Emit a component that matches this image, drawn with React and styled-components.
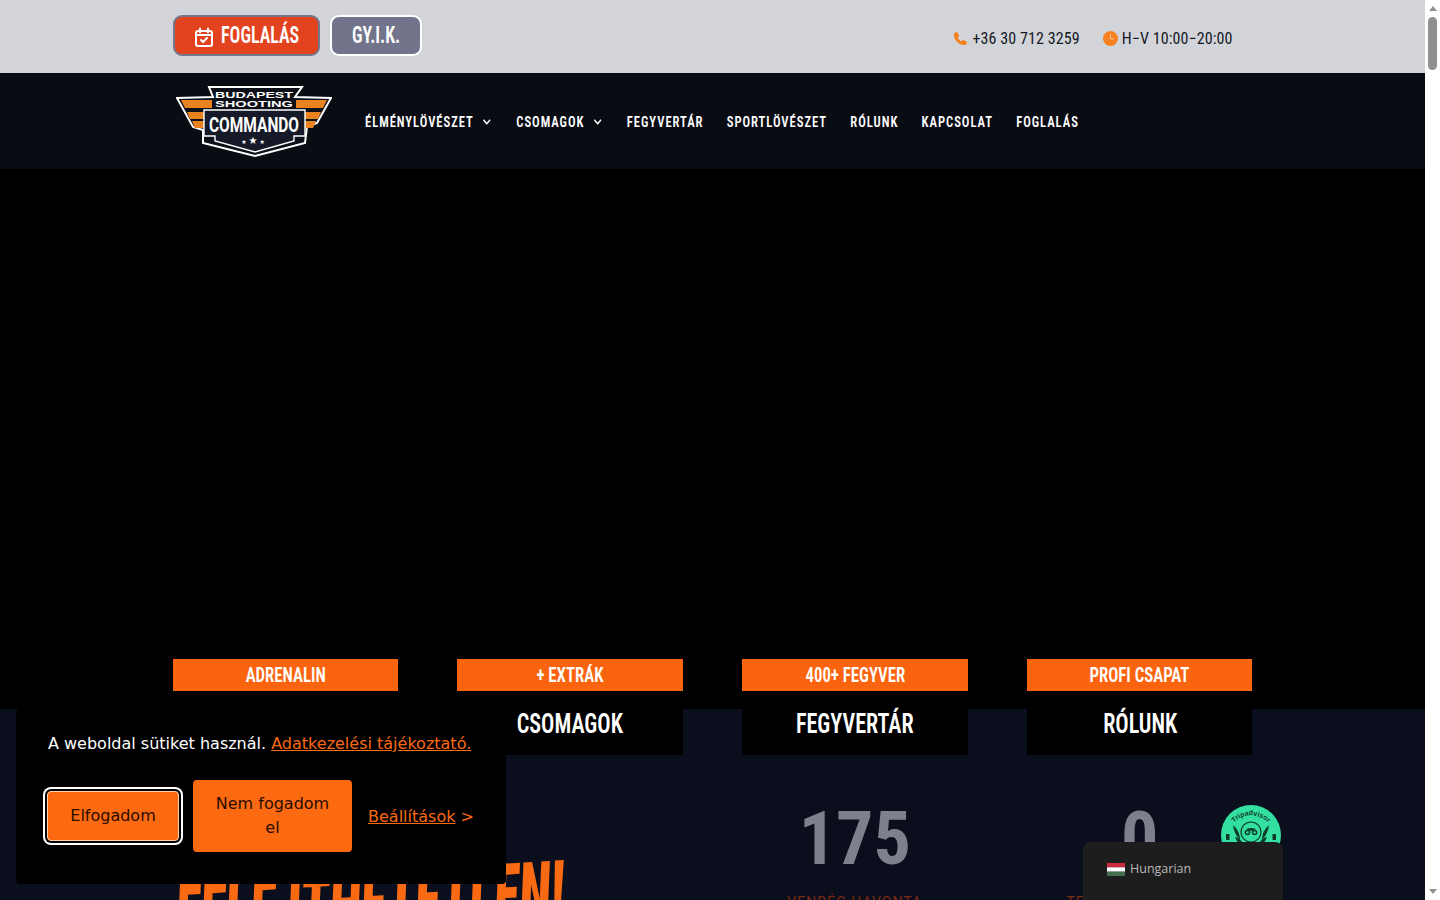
import React from 'react'
import styled, {createGlobalStyle} from 'styled-components'
import {ChevronDown} from 'lucide-react'

const GlobalStyle = createGlobalStyle`
    html, body {
        margin: 0;
        height: 100%;
        overflow: hidden;
        background: #fff;
    }
    * {
        box-sizing: border-box;
    }
`

const CONDENSED = `"Roboto", "Liberation Sans", sans-serif`

const Shell = styled.div`
    display: flex;
    width: 1440px;
    height: 900px;
    overflow: hidden;
`
const Page = styled.div`
    width: 1425px;
    flex: none;
    height: 900px;
    overflow: hidden;
    background: #0b0e1c;
`
const Container = styled.div`
    width: 1080px;
    margin: 0 auto;
    display: flex;
    align-items: center;
`
const TopBar = styled.div`
    height: 73px;
    background: #d2d4da;
`
const TopInner = styled(Container)`
    height: 73px;
    justify-content: space-between;
    padding-right: 20px;
`
const TopButtons = styled.div`
    display: flex;
    gap: 10px;
    margin-top: -3px;
`
const TopButton = styled.a`
    display: flex;
    align-items: center;
    justify-content: center;
    gap: 7px;
    width: ${p => p.$width}px;
    height: 41px;
    border-radius: 9px;
    border: 2px solid ${p => p.$border};
    background: ${p => p.$bg};
    color: #fff;
    font-family: ${CONDENSED};
    font-stretch: 75%;
    font-size: 23px;
    font-weight: 600;
    svg {
        margin-top: 3px;
    }
`
const TopLabel = styled.span`
    display: block;
    width: ${p => p.$width}px;
    white-space: nowrap;
    transform: scaleX(0.78);
    transform-origin: left center;
`
const ContactList = styled.div`
    display: flex;
    gap: 23px;
    margin-top: 3px;
`
const Contact = styled.div`
    display: flex;
    align-items: center;
    gap: 4px;
    color: #16181f;
    font-family: "Roboto", sans-serif;
    font-stretch: 75%;
    font-size: 16px;
    letter-spacing: 0.1px;
`
const NavBar = styled.div`
    height: 96px;
    background: #0a0c14;
`
const NavInner = styled(Container)`
    height: 96px;
`
const LogoBox = styled.div`
    width: 192.5px;
    flex: none;
    padding-left: 3.5px;
    display: flex;
    margin-top: 1px;
`
const NavList = styled.nav`
    display: flex;
    align-items: center;
    gap: 27.7px;
    margin-top: 1px;
    transform: scaleX(0.84);
    transform-origin: left center;
`
const NavLink = styled.a`
    display: flex;
    align-items: center;
    gap: 8.8px;
    color: #fff;
    font-family: ${CONDENSED};
    font-stretch: 75%;
    font-size: 15px;
    font-weight: 600;
    letter-spacing: 1.15px;
    white-space: nowrap;
`
const Hero = styled.div`
    height: 540px;
    background: #000;
`
const CardRow = styled(Container)`
    justify-content: space-between;
    align-items: flex-start;
    margin-top: -50px;
`
const Card = styled.div`
    width: 225.5px;
    height: 96px;
    background: #000;
    display: flex;
    flex-direction: column;
`
const CardTag = styled.div`
    height: 32px;
    background: #fb640f;
    color: #fff;
    font-family: ${CONDENSED};
    font-stretch: 75%;
    font-size: 20px;
    font-weight: 600;
    display: flex;
    align-items: center;
    justify-content: center;
    span {
        transform: scaleX(0.84);
    }
`
const CardTitle = styled.div`
    flex: 1;
    padding-top: 1px;
    color: #fff;
    font-family: ${CONDENSED};
    font-stretch: 75%;
    font-size: 27px;
    font-weight: 600;
    display: flex;
    align-items: center;
    justify-content: center;
    span {
        transform: scaleX(0.82);
    }
`
const Lower = styled(Container)`
    align-items: flex-start;
    height: 145px;
`
const HeadlineCol = styled.div`
    width: 569.5px;
    flex: none;
`
const Headline = styled.h1`
    margin: 119px 0 0 5px;
    color: #f96a13;
    font-family: ${CONDENSED};
    font-stretch: 75%;
    font-size: 84px;
    font-weight: 900;
    line-height: 1;
    white-space: nowrap;
    width: max-content;
    transform: rotate(-3.6deg) skewX(-6deg) scaleX(0.615);
    transform-origin: left top;
`
const Stat = styled.div`
    width: 225.5px;
    flex: none;
    margin-right: ${p => p.$last ? '0' : '59.5px'};
    margin-top: 47px;
    text-align: center;
`
const StatNumber = styled.div`
    color: #7e818b;
    font-family: "Roboto", sans-serif;
    font-stretch: 84%;
    font-size: 74px;
    font-weight: 700;
    line-height: 74px;
`
const StatLabel = styled.div`
    margin-top: 18px;
    color: #7a2a12;
    font-family: "Roboto", sans-serif;
    font-size: 14px;
    letter-spacing: 1px;
    white-space: nowrap;
`
const Badge = styled.div`
    position: absolute;
    left: 1221px;
    top: 805px;
    width: 60px;
    height: 60px;
`
const ScrollTrack = styled.div`
    width: 15px;
    flex: none;
    height: 900px;
    background: #fff;
    display: flex;
    flex-direction: column;
    align-items: center;
`
const ScrollArrow = styled.div`
    width: 0;
    height: 0;
    margin-top: ${p => p.$down ? 'auto' : '6px'};
    margin-bottom: ${p => p.$down ? '6px' : '0'};
    border-left: 4.5px solid transparent;
    border-right: 4.5px solid transparent;
    ${p => p.$down ? 'border-top: 5px solid #8f8f8f;' : 'border-bottom: 5px solid #8f8f8f;'}
`
const ScrollThumb = styled.div`
    width: 9px;
    height: 53px;
    margin-top: 6px;
    border-radius: 5px;
    background: #8f8f8f;
`
const CookieBanner = styled.div`
    position: fixed;
    left: 16px;
    top: 709px;
    width: 490px;
    height: 175px;
    padding: 25px 32px;
    border-radius: 4px;
    background: #000;
    color: #fff;
    font-family: "DejaVu Sans", sans-serif;
    font-size: 16px;
`
const CookieText = styled.div`
    line-height: 20px;
`
const OrangeLink = styled.a`
    color: #f96a13;
    text-decoration: underline;
`
const CookieActions = styled.div`
    display: flex;
    align-items: center;
    margin-top: 26px;
    margin-left: -1px;
    gap: 14px;
`
const CookieButton = styled.button`
    border: ${p => p.$focused ? '1px solid #ffcfa8' : '0'};
    border-radius: 4px;
    padding: 0 ${p => p.$focused ? '10px' : '22px'};
    width: ${p => p.$width}px;
    height: ${p => p.$height}px;
    background: #fb6a10;
    color: #2a0d00;
    font-family: "DejaVu Sans", sans-serif;
    font-size: 16px;
    line-height: 24px;
    box-shadow: ${p => p.$focused ? '0 0 0 2px #000, 0 0 0 4px #fff' : 'none'};
`
const SettingsLink = styled.span`
    color: #f96a13;
    margin-left: 2px;
    white-space: nowrap;
`
const LangSwitcher = styled.div`
    position: fixed;
    left: 1083px;
    top: 842px;
    width: 200px;
    height: 58px;
    padding: 18px 24px;
    border-radius: 8px 8px 0 0;
    background: #1d1d1d;
    display: flex;
    align-items: flex-start;
    gap: 5px;
    color: #b8b8b8;
    font-family: "Open Sans", sans-serif;
    font-size: 12.5px;
    line-height: 18px;
`
const FlagIcon = styled.svg`
    margin-top: 3px;
`

function Logo(){
    return (
        <svg width="156" height="72" viewBox="0 0 156 72">
            <path d="M1 12 L37 11 L33 1 L126 1 L119 11 L155 12 L141 37 L131 41 L129 57 L79 70 L27 57 L27 44 L17 41 Z" fill="#0d1018" stroke="#fff" strokeWidth="2" />
            <g fill="#e98320">
                <path d="M5 14 H36 V22 H9 Z" />
                <path d="M11 26 H28 V33 H14 Z" />
                <path d="M16 35 H28 V42 H19 Z" />
                <path d="M120 14 H151 L147 22 H120 Z" />
                <path d="M128 26 H145 L142 33 H128 Z" />
                <path d="M128 35 H140 L137 42 H128 Z" />
            </g>
            <text x="78" y="12" textAnchor="middle" fill="#fff" fontFamily="Liberation Sans" fontWeight="700" fontSize="9" textLength="78" lengthAdjust="spacingAndGlyphs">BUDAPEST</text>
            <text x="78" y="20.500" textAnchor="middle" fill="#fff" fontFamily="Liberation Sans" fontWeight="700" fontSize="9" textLength="78" lengthAdjust="spacingAndGlyphs">SHOOTING</text>
            <path d="M28 24 H129 V50 H118 V55 L79 66 L39 55 V50 H28 Z" fill="#161a28" stroke="#fff" strokeWidth="1.400" />
            <text x="78" y="46" textAnchor="middle" fill="#fff" fontFamily="Roboto" fontWeight="700" fontSize="21" textLength="90" lengthAdjust="spacingAndGlyphs">COMMANDO</text>
            <text x="78" y="58" textAnchor="middle" fill="#fff" fontFamily="DejaVu Sans" fontSize="6" letterSpacing="2">★<tspan fontSize="10">★</tspan>★</text>
        </svg>
    )
}

function CalendarIcon(){
    return (
        <svg width="20" height="20" viewBox="0 0 20 20" fill="none" stroke="#fff" strokeWidth="2" strokeLinecap="round" strokeLinejoin="round">
            <rect x="2" y="4" width="16" height="15" rx="2" />
            <path d="M6 1.500v4M14 1.500v4M2 8h16" />
            <path d="M7 13l2 2 4-4" />
        </svg>
    )
}

function PhoneIcon(){
    return (
        <svg width="15" height="15" viewBox="0 0 24 24" fill="#f7811e">
            <path d="M6.600 1.500 L9.500 7.200 C9.800 7.900 9.600 8.600 9.100 9.100 L7.600 10.600 C8.700 13 10.900 15.300 13.400 16.400 L14.900 14.900 C15.400 14.400 16.100 14.200 16.800 14.500 L22.500 17.400 C23 19.500 21.500 22.500 18.500 22.500 C9.500 22.500 1.500 14 1.500 5.500 C1.500 3 4.500 1 6.600 1.500 Z" />
        </svg>
    )
}

function ClockIcon(){
    return (
        <svg width="15" height="15" viewBox="0 0 15 15">
            <circle cx="7.500" cy="7.500" r="7.500" fill="#f7811e" />
            <path d="M7.500 3.500 V7.800 H11" fill="none" stroke="#f7c9a0" strokeWidth="1" />
        </svg>
    )
}

function TripBadge(){
    return (
        <svg width="60" height="60" viewBox="0 0 60 60">
            <circle cx="30" cy="30" r="30" fill="#34e0a1" />
            <path id="tripArc" d="M9 24 A23 23 0 0 1 51 24" fill="none" />
            <text fontFamily="Liberation Sans" fontWeight="700" fontSize="7" fill="#0c3b2c">
                <textPath href="#tripArc" startOffset="50%" textAnchor="middle">Tripadvisor</textPath>
            </text>
            <circle cx="30" cy="27" r="10" fill="none" stroke="#0c3b2c" strokeWidth="1.200" />
            <circle cx="26.400" cy="27.500" r="2.800" fill="#0c3b2c" />
            <circle cx="33.600" cy="27.500" r="2.800" fill="#0c3b2c" />
            <circle cx="26.400" cy="27.500" r="1.300" fill="#34e0a1" />
            <circle cx="33.600" cy="27.500" r="1.300" fill="#34e0a1" />
            <path d="M25 24 Q30 22 35 24 L30 26 Z" fill="#0c3b2c" />
            <g fill="#0c3b2c">
                <path d="M12 20 Q19 26 19 35 Q13 29 12 20 Z" />
                <path d="M14 32 Q20 33 24 42 Q17 40 14 32 Z" />
                <path d="M48 20 Q41 26 41 35 Q47 29 48 20 Z" />
                <path d="M46 32 Q40 33 36 42 Q43 40 46 32 Z" />
                <rect x="5" y="29" width="3.500" height="6" />
                <rect x="51.500" y="29" width="3.500" height="6" />
            </g>
        </svg>
    )
}

function Flag(){
    return (
        <FlagIcon width="18" height="13" viewBox="0 0 18 13">
            <rect width="18" height="4.330" fill="#cd2a3e" />
            <rect y="4.330" width="18" height="4.340" fill="#fff" />
            <rect y="8.670" width="18" height="4.330" fill="#436f4d" />
        </FlagIcon>
    )
}

const cards = [
    {tag: 'ADRENALIN', title: ''},
    {tag: '+ EXTRÁK', title: 'CSOMAGOK'},
    {tag: '400+ FEGYVER', title: 'FEGYVERTÁR'},
    {tag: 'PROFI CSAPAT', title: 'RÓLUNK'},
]

const navItems = [
    {label: 'ÉLMÉNYLÖVÉSZET', drop: true},
    {label: 'CSOMAGOK', drop: true},
    {label: 'FEGYVERTÁR'},
    {label: 'SPORTLÖVÉSZET'},
    {label: 'RÓLUNK'},
    {label: 'KAPCSOLAT'},
    {label: 'FOGLALÁS'},
]

function App(){
    return (
        <Shell>
            <GlobalStyle />
            <Page>
                <TopBar>
                    <TopInner>
                        <TopButtons>
                            <TopButton $width={147} $bg="#e3421f" $border="#72758c"><CalendarIcon /><TopLabel $width={78}>FOGLALÁS</TopLabel></TopButton>
                            <TopButton $width={92} $bg="#71748b" $border="#fff"><TopLabel $width={48}>GY.I.K.</TopLabel></TopButton>
                        </TopButtons>
                        <ContactList>
                            <Contact><PhoneIcon />+36 30 712 3259</Contact>
                            <Contact><ClockIcon />H−V 10:00−20:00</Contact>
                        </ContactList>
                    </TopInner>
                </TopBar>
                <NavBar>
                    <NavInner>
                        <LogoBox><Logo /></LogoBox>
                        <NavList>
                            {navItems.map(item => (
                                <NavLink key={item.label}>
                                    {item.label}
                                    {item.drop && <ChevronDown size={14} strokeWidth={3} />}
                                </NavLink>
                            ))}
                        </NavList>
                    </NavInner>
                </NavBar>
                <Hero />
                <CardRow>
                    {cards.map(card => (
                        <Card key={card.tag}>
                            <CardTag><span>{card.tag}</span></CardTag>
                            <CardTitle><span>{card.title}</span></CardTitle>
                        </Card>
                    ))}
                </CardRow>
                <Lower>
                    <HeadlineCol>
                        <Headline>FELEJTHETETLEN!</Headline>
                    </HeadlineCol>
                    <Stat>
                        <StatNumber>175</StatNumber>
                        <StatLabel>VENDÉG HAVONTA</StatLabel>
                    </Stat>
                    <Stat $last>
                        <StatNumber>0</StatNumber>
                        <StatLabel>TELJESÍTETT LÖVÉS</StatLabel>
                    </Stat>
                </Lower>
                <Badge><TripBadge /></Badge>
            </Page>
            <ScrollTrack>
                <ScrollArrow />
                <ScrollThumb />
                <ScrollArrow $down />
            </ScrollTrack>
            <CookieBanner>
                <CookieText>A weboldal sütiket használ. <OrangeLink>Adatkezelési tájékoztató.</OrangeLink></CookieText>
                <CookieActions>
                    <CookieButton $focused $width={132} $height={50}>Elfogadom</CookieButton>
                    <CookieButton $width={159} $height={72}>Nem fogadom el</CookieButton>
                    <SettingsLink><OrangeLink>Beállítások</OrangeLink> &gt;</SettingsLink>
                </CookieActions>
            </CookieBanner>
            <LangSwitcher><Flag />Hungarian</LangSwitcher>
        </Shell>
    )
}

export default App
